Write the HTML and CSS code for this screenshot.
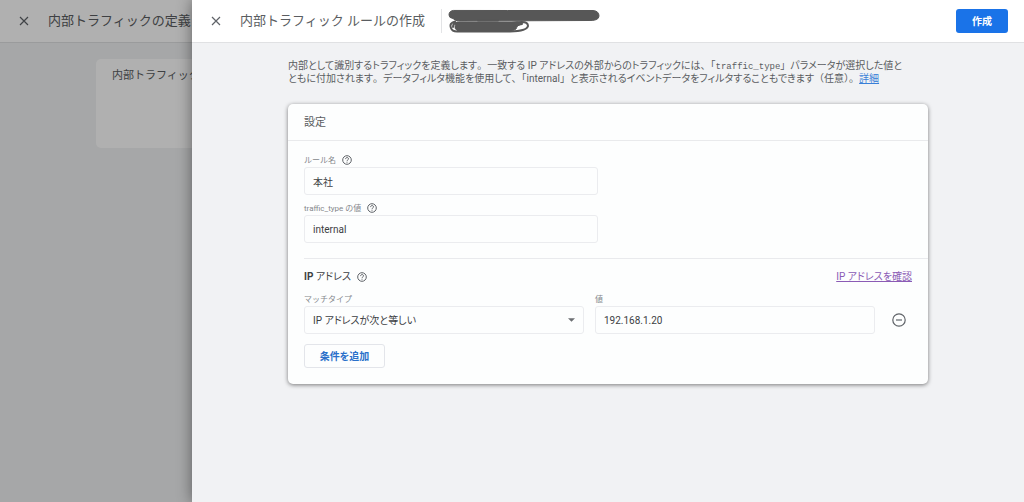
FILE: index.html
```html
<!DOCTYPE html>
<html lang="ja">
<head>
<meta charset="utf-8">
<title>内部トラフィック ルールの作成</title>
<link rel="stylesheet" href="styles.css">
</head>
<body>
<div class="page">
  <header class="bar">
    <button class="icon-button" type="button" aria-label="閉じる"><svg class="close" viewBox="0 0 10 10"><path d="M1 1l8 8M9 1L1 9"/></svg></button>
    <h2 class="title">内部トラフィックの定義</h2>
  </header>
  <div class="back-card">内部トラフィック ルール</div>
</div>
<div class="scrim"></div>
<main class="drawer">
  <header class="bar">
    <button class="icon-button" type="button" aria-label="閉じる"><svg class="close" viewBox="0 0 10 10"><path d="M1 1l8 8M9 1L1 9"/></svg></button>
    <h1 class="title">内部トラフィック ルールの作成</h1>
    <div class="account">
      <svg class="scribble" viewBox="0 0 154 24">
        <path class="solid" d="M5 1.5Q1 2 1 6Q1 9 5 9.500Q7 12 12 12L140 11.500Q151 12 151 7Q151 2 145 1.500H60Z"/>
        <path class="solid" d="M9 13H70L73 15Q68 17 68 20L64 22H10Q6 20 7 17Z"/>
        <path class="loop" d="M7 12.500Q1 14 3 19Q4 22.500 9 22.500H62Q79 22 80 17Q80 13 74 13Q69 13 64 14M5 18q0-4 4-4M66 19q2-3 8-4M30 11.500H50"/>
      </svg>
    </div>
    <button class="primary" type="button">作成</button>
  </header>
  <div class="content">
    <p class="intro">内部として識別するトラフィックを定義します<span class="full">。</span>一致する IP アドレスの外部からのトラフィックには<span class="full">、「</span><code>traffic_type</code><span class="full">」</span>パラメータが選択した値と<br>ともに付加されます<span class="full">。</span>データフィルタ機能を使用して<span class="full">、「</span>internal<span class="full">」</span>と表示されるイベントデータをフィルタすることもできます<span class="full">（</span>任意<span class="full">）。</span><a href="#">詳細</a></p>
    <form class="card">
      <h2 class="card-head">設定</h2>
      <section class="names">
        <div class="label-row"><label for="rule">ルール名</label><svg class="help" viewBox="0 0 10 10"><circle cx="5" cy="5" r="4.3"/><path d="M3.6 4.1C3.6 2 6.5 2 6.5 3.9C6.5 4.9 5 5 5 6.1"/><path d="M5 6.8v.9"/></svg></div>
        <input class="field" id="rule" value="本社">
        <div class="label-row second"><label for="type">traffic_type の値</label><svg class="help" viewBox="0 0 10 10"><circle cx="5" cy="5" r="4.3"/><path d="M3.6 4.1C3.6 2 6.5 2 6.5 3.9C6.5 4.9 5 5 5 6.1"/><path d="M5 6.8v.9"/></svg></div>
        <input class="field" id="type" value="internal">
      </section>
      <section class="addresses">
        <div class="section-head">
          <h3><b>IP</b> アドレス</h3><svg class="help" viewBox="0 0 10 10"><circle cx="5" cy="5" r="4.3"/><path d="M3.6 4.1C3.6 2 6.5 2 6.5 3.9C6.5 4.9 5 5 5 6.1"/><path d="M5 6.8v.9"/></svg>
          <a class="visited" href="#">IP アドレスを確認</a>
        </div>
        <div class="condition">
          <div>
            <label class="label-row" for="match">マッチタイプ</label>
            <div class="select-box">
              <select class="field" id="match"><option>IP アドレスが次と等しい</option></select>
              <svg class="arrow" viewBox="0 0 8 4"><path d="M0 0h8L4 4z"/></svg>
            </div>
          </div>
          <div>
            <label class="label-row" for="value">値</label>
            <input class="field" id="value" value="192.168.1.20">
          </div>
          <button class="icon-button remove" type="button" aria-label="削除"><svg viewBox="0 0 14 14"><circle cx="7" cy="7" r="6.2"/><path d="M4 7h6"/></svg></button>
        </div>
        <button class="add" type="button">条件を追加</button>
      </section>
    </form>
  </div>
</main>
</body>
</html>
```
FILE: styles.css
```css
* { box-sizing: border-box; }
body {
  margin: 0;
  min-height: 100vh;
  overflow: hidden;
  background: #f1f2f4;
  color: #5a5d61;
  font: 10px/13px Roboto, "Noto Sans CJK JP", sans-serif;
  font-feature-settings: "palt";
}
h1, h2, h3, p { margin: 0; font-weight: 400; }
button, input, select { font: inherit; font-feature-settings: inherit; color: inherit; }
svg { display: block; flex: none; fill: none; stroke: #5f6368; }
a { color: #3980d8; }
.bar {
  display: flex;
  align-items: center;
  height: 43px;
  padding: 0 16px;
  background: #fff;
  border-bottom: 1px solid #e0e1e3;
}
.icon-button {
  display: flex;
  align-items: center;
  justify-content: center;
  width: 16px;
  height: 16px;
  padding: 0;
  border: 0;
  background: none;
}
.close { width: 10px; height: 10px; stroke-width: 1.2; }
.title, .back-card, .label-row, .full { font-feature-settings: normal; }
.title { margin-left: 16px; font-size: 13px; line-height: 20px; white-space: nowrap; }
.back-card {
  height: 89px;
  margin: 16px 96px;
  padding: 10px 16px;
  background: #fff;
  border-radius: 5px;
  font-size: 11px;
}
.scrim { position: absolute; inset: 0; background: rgba(0, 0, 0, .31); }
.drawer {
  position: absolute;
  inset: 0 0 0 192px;
  background: #f1f2f4;
  box-shadow: 0 0 14px rgba(0, 0, 0, .45);
}
.account { margin-left: 16px; padding-left: 6px; border-left: 1px solid #e3e4e6; }
.scribble { width: 154px; height: 24px; stroke: #575757; stroke-linecap: round; }
.solid { fill: #575757; }
.loop { stroke-width: 2; }
.primary {
  width: 52px;
  height: 24px;
  margin-left: auto;
  border: 0;
  border-radius: 3px;
  background: #1a73e8;
  color: #fff;
  font-weight: 700;
}
.content { padding: 16px 96px; }
.intro { white-space: nowrap; }
code { font-family: "Liberation Mono", monospace; font-size: 9px; line-height: 1; }
.card {
  margin-top: 19px;
  background: #fdfefe;
  border-radius: 5px;
  box-shadow: 0 1px 4px rgba(0, 0, 0, .5);
}
.card-head { padding: 12px 16px 11px; border-bottom: 1px solid #e9eaec; font-size: 11px; }
.names { padding: 12px 16px 15px; }
.label-row { display: flex; align-items: center; gap: 6px; height: 14px; font-size: 8px; color: #85888c; }
.second { margin-top: 6px; }
.help { width: 10px; height: 10px; stroke-width: 1; }
.field {
  display: block;
  width: 100%;
  height: 28px;
  padding: 0 8px;
  border: 1px solid #ebecef;
  border-radius: 3px;
  background: transparent;
  color: #3c4043;
  appearance: none;
}
.names .field { max-width: 294px; }
.addresses { margin-left: 16px; padding: 11px 16px 16px 0; border-top: 1px solid #e9eaed; }
.section-head { display: flex; align-items: center; gap: 6px; }
.section-head h3 { color: #3c4043; font-size: 10px; }
.visited { margin-left: auto; color: #8b5bb5; }
.condition { display: grid; grid-template-columns: 1fr 1fr 26px; column-gap: 11px; margin-top: 9px; }
.remove { align-self: end; width: 100%; height: 28px; }
.remove svg { width: 14px; height: 14px; stroke-width: 1.2; }
.select-box { display: grid; align-items: center; }
.select-box > * { grid-area: 1 / 1; }
.arrow { width: 7px; height: 4px; justify-self: end; margin-right: 9px; fill: #6b6e72; stroke: none; pointer-events: none; }
.add {
  width: 81px;
  height: 24px;
  margin-top: 10px;
  padding: 0;
  border: 1px solid #e3e5ea;
  border-radius: 3px;
  background: transparent;
  color: #2a70ca;
  font-weight: 700;
}
```
